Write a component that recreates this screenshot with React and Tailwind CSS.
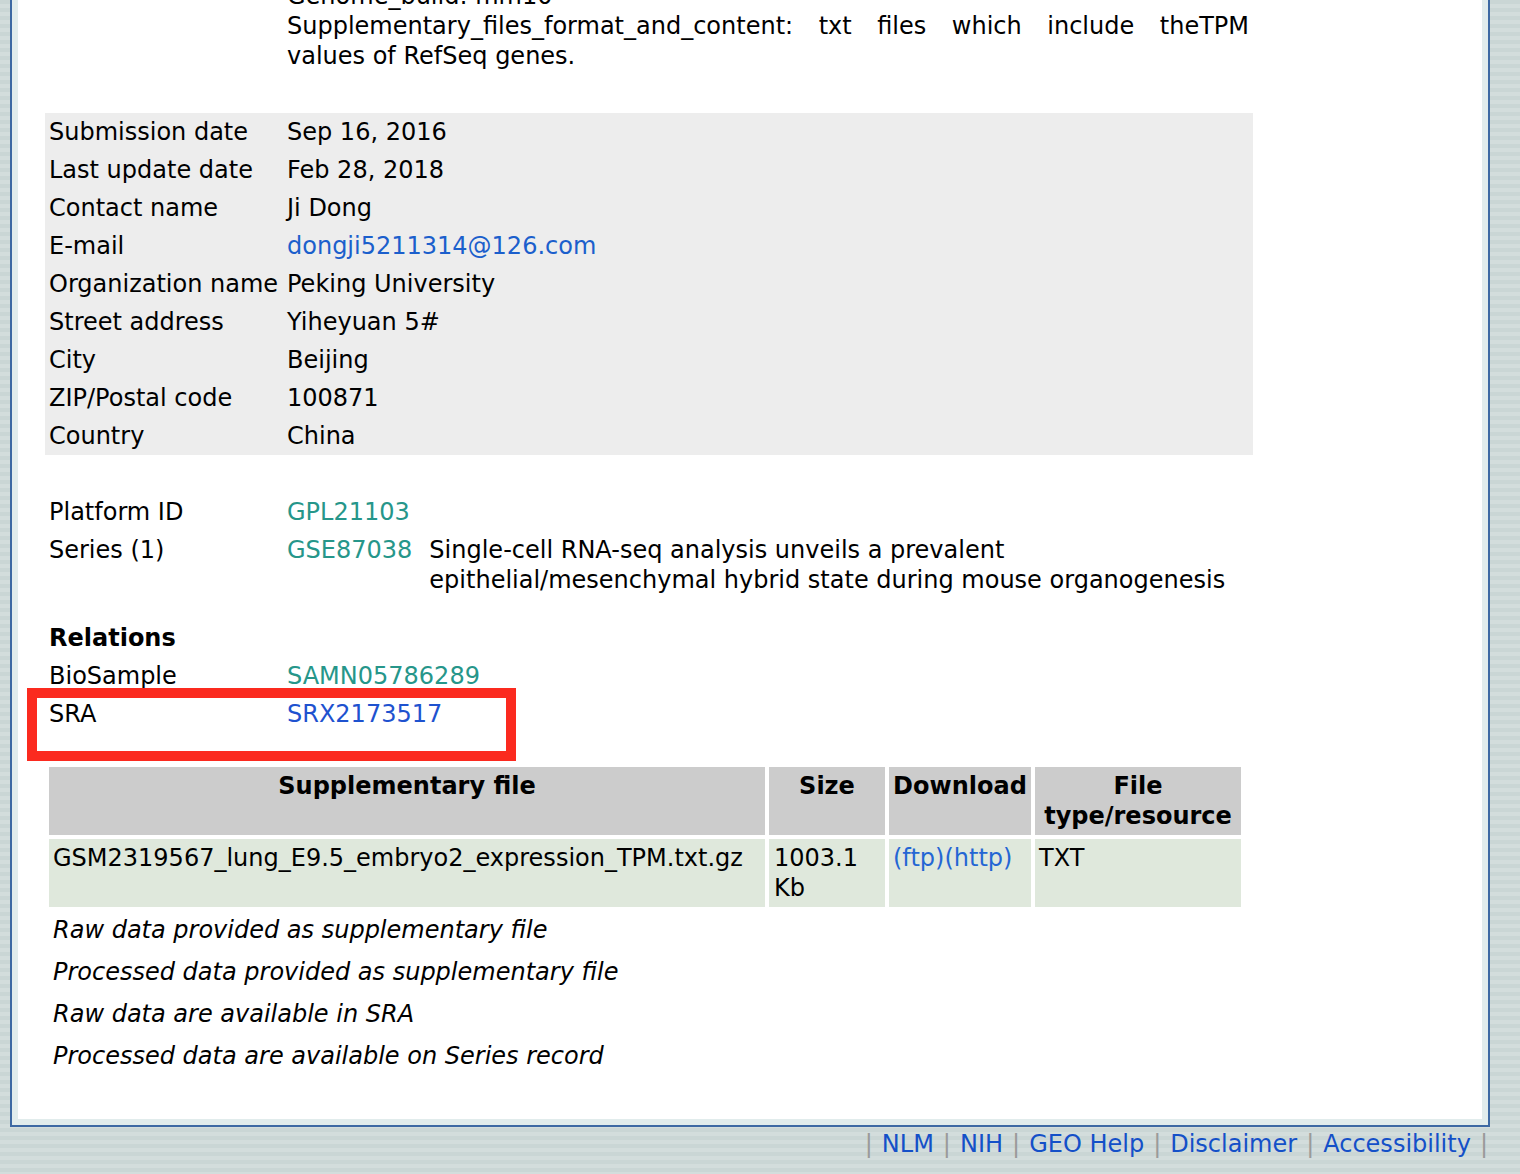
import React from "react";

const contact = [
  ["Submission date", "Sep 16, 2016"],
  ["Last update date", "Feb 28, 2018"],
  ["Contact name", "Ji Dong"],
  ["E-mail", "dongji5211314@126.com", "link"],
  ["Organization name", "Peking University"],
  ["Street address", "Yiheyuan 5#"],
  ["City", "Beijing"],
  ["ZIP/Postal code", "100871"],
  ["Country", "China"],
];

const notes = [
  "Raw data provided as supplementary file",
  "Processed data provided as supplementary file",
  "Raw data are available in SRA",
  "Processed data are available on Series record",
];

const footerLinks = ["NLM", "NIH", "GEO Help", "Disclaimer", "Accessibility"];

function Row({ label, children, bold }) {
  return (
    <div className="grid grid-cols-[238px_1fr]">
      <div className={"px-[4px] py-[4px] " + (bold ? "font-bold" : "")}>{label}</div>
      <div className="px-[4px] py-[4px]">{children}</div>
    </div>
  );
}

export default function App() {
  return (
    <div className="relative h-[1174px] w-full overflow-hidden bg-[repeating-linear-gradient(180deg,#cad6d5_0px,#cad6d5_4px,#d3dddc_4px,#d3dddc_8px)] font-['DejaVu_Sans',Verdana,sans-serif] text-[24px] leading-[30px] text-black">
      <div className="-mt-[40px] ml-[10px] h-[1167px] w-[1480px] border-2 border-[#3d69a3]">
        <div className="h-full border-[6px] border-[#e1ecec] bg-white pl-[27px] pt-[13px]">
          <div className="w-[1208px]">
            {/* characteristics tail */}
            <div className="grid grid-cols-[238px_1fr]">
              <div />
              <div className="px-[4px]">
                <div>Genome_build: mm10</div>
                <div className="text-justify [text-align-last:justify]">
                  Supplementary_files_format_and_content: txt files which include theTPM
                </div>
                <div>values of RefSeq genes.</div>
              </div>
            </div>

            {/* contact box */}
            <div className="mt-[42px] bg-[#ededed]">
              {contact.map(([label, value, kind]) => (
                <Row key={label} label={label}>
                  {kind === "link" ? <span className="text-[#1b5fcc]">{value}</span> : value}
                </Row>
              ))}
            </div>

            <div className="mt-[38px]">
              <Row label="Platform ID">
                <span className="text-[#26968a]">GPL21103</span>
              </Row>
              <Row label="Series (1)">
                <div className="flex gap-[17px]">
                  <span className="text-[#26968a]">GSE87038</span>
                  <span>
                    Single-cell RNA-seq analysis unveils a prevalent
                    <br />
                    epithelial/mesenchymal hybrid state during mouse organogenesis
                  </span>
                </div>
              </Row>
            </div>

            <div className="mt-[20px]">
              <Row label="Relations" bold />
              <Row label="BioSample">
                <span className="text-[#26968a]">SAMN05786289</span>
              </Row>
              <Row label="SRA">
                <span className="text-[#1e52cf]">SRX2173517</span>
              </Row>
            </div>

            {/* supplementary files */}
            <div className="mt-[34px] grid grid-cols-[716px_116px_142px_206px] gap-[4px] pl-[4px]">
              <div className="bg-[#cccccc] px-[4px] py-[4px] text-center font-bold">Supplementary file</div>
              <div className="bg-[#cccccc] px-[4px] py-[4px] text-center font-bold">Size</div>
              <div className="bg-[#cccccc] py-[4px] text-center font-bold">Download</div>
              <div className="bg-[#cccccc] px-[4px] py-[4px] text-center font-bold">File type/resource</div>
              <div className="whitespace-nowrap bg-[#dfe8dc] px-[4px] py-[4px]">GSM2319567_lung_E9.5_embryo2_expression_TPM.txt.gz</div>
              <div className="bg-[#dfe8dc] px-[5px] py-[4px]">1003.1 Kb</div>
              <div className="bg-[#dfe8dc] px-[4px] py-[4px] text-[#2466d4]">(ftp)(http)</div>
              <div className="bg-[#dfe8dc] px-[4px] py-[4px]">TXT</div>
            </div>

            <div className="mt-[8px] flex flex-col gap-[12px] pl-[8px] italic">
              {notes.map((n) => (
                <div key={n}>{n}</div>
              ))}
            </div>
          </div>
        </div>
      </div>

      {/* footer */}
      <div className="flex justify-end pr-[23px] pt-[2px] text-[#1450c8]">
        {footerLinks.map((l, i) => (
          <span key={l} className="flex">
            {i === 0 && <span className="px-[9px] text-[#9a9a9a]">|</span>}
            <span>{l}</span>
            <span className="px-[9px] text-[#9a9a9a]">|</span>
          </span>
        ))}
      </div>

      {/* highlight annotation */}
      <div className="absolute left-[27px] top-[688px] h-[73px] w-[489px] border-[10px] border-[#fb2a1f]" />
    </div>
  );
}
